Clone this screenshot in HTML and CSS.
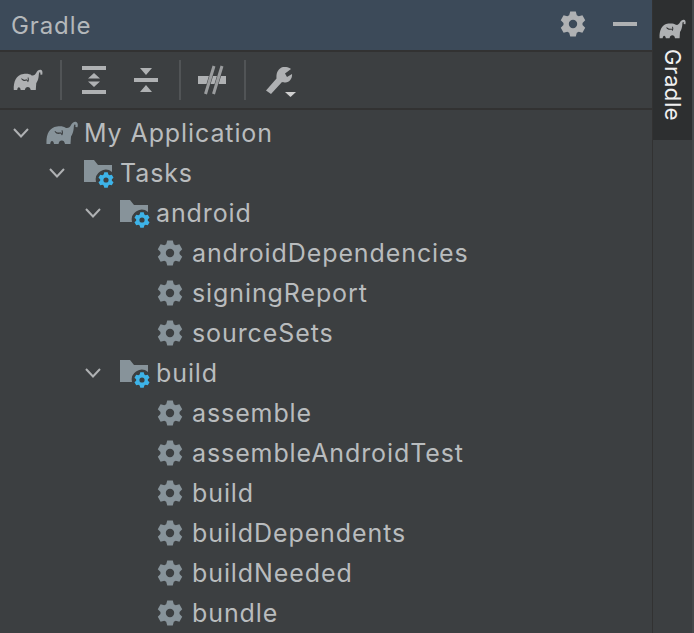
FILE: index.html
```html
<!DOCTYPE html>
<html lang="en">
<head>
<meta charset="utf-8">
<title>Gradle</title>
<link rel="stylesheet" href="styles.css">
</head>
<body>
<svg class="defs" width="0" height="0" aria-hidden="true">
  <defs>
    <symbol id="elephant" viewBox="0 0 32 24">
      <path fill-rule="evenodd" d="M0.500 23 C0 14 3 6.500 11 5.500 C15 5 18 5.500 20 7 C22.500 7.500 24 6 25 4 C26 1.800 28 0.500 29.800 0.800 C31.800 1.200 32.200 3.800 31.500 6.200 L29.300 6 C29.800 4.500 29.500 3.200 28.600 3.600 C27.600 4 28 7 27.500 9 C27 12 26 14 25 15.500 L24.500 23 L19 23 C18.500 20.500 17.500 19.500 15.800 19.500 C14 19.500 13 20.500 12.500 23 L8 23 C7.800 21 7 20 6 20 C5 20 4.500 21 4.200 23 Z M8.500 10.500 C10 13 12.500 13.500 14.500 12.500 L16 14.500 C17.500 12.500 17 10.500 16.300 9 L15.500 9.500 C16 11 15.800 11.500 15.500 12.500 L14.500 11.300 C12.500 12 10.500 11.500 9.300 10 Z"/>
    </symbol>
    <symbol id="gear" viewBox="0 0 26 26">
      <path fill-rule="evenodd" d="M10.200 0.500 H15.800 L16.800 4.200 L18.720 5.310 L22.425 4.330 L25.225 9.170 L22.520 11.890 V14.110 L25.225 16.830 L22.425 21.670 L18.720 20.690 L16.800 21.800 L15.800 25.500 H10.200 L9.200 21.800 L7.280 20.690 L3.575 21.670 L0.775 16.830 L3.480 14.110 V11.890 L0.775 9.170 L3.575 4.330 L7.280 5.310 L9.200 4.200 Z M13 8.800 A4.200 4.200 0 1 0 13 17.200 A4.200 4.200 0 1 0 13 8.800 Z"/>
    </symbol>
    <symbol id="folder-gear" viewBox="0 0 30 30">
      <path class="folder-shape" d="M0 1 H10 L14 6 H28 V13 A10 10 0 0 0 12 23 H0 Z"/>
      <use href="#gear" class="badge-gear" x="14" y="13" width="16" height="16"/>
    </symbol>
  </defs>
</svg>

<main class="window">
  <section class="panel">
    <header class="title-bar">
      <h1 class="title">Gradle</h1>
      <div class="title-actions">
        <svg class="title-gear"><use href="#gear"/></svg>
        <span class="minimize"></span>
      </div>
    </header>

    <div class="toolbar">
      <svg class="tool elephant-tool"><use href="#elephant"/></svg>
      <span class="sep sep-first"></span>
      <svg class="tool expand" viewBox="0 0 24 28">
        <path d="M0 0 H24 V4 H0 Z M0 24 H24 V28 H0 Z M12 7 L18 12.500 H6 Z M6 15.500 H18 L12 21 Z"/>
      </svg>
      <svg class="tool collapse" viewBox="0 0 24 24">
        <path d="M6 0 H18 L12 7 Z M0 10 H24 V14 H0 Z M12 17 L18 24 H6 Z"/>
      </svg>
      <span class="sep sep-second"></span>
      <svg class="tool unlink" viewBox="0 0 28 28">
        <path d="M0 10 H28 V18 H0 Z"/>
        <path class="slash-gap" d="M7.500 28 L16 0 M15.500 28 L24 0"/>
        <path class="slash" d="M7.500 28 L16 0 M15.500 28 L24 0"/>
      </svg>
      <span class="sep sep-third"></span>
      <svg class="tool wrench" viewBox="0 0 32 30">
        <path d="M18 0 C21 -0.500 24 0.500 26 2 L20 6.500 L22 10 L27 7 C27.500 11 25 15 20.500 15.500 C19 15.500 18 15.200 17 15 L6 27 L1 23.500 L11.500 11.500 C11 6 13 1.500 18 0 Z"/>
        <path class="wrench-arrow" d="M20 25 H31 L25.500 30 Z"/>
      </svg>
    </div>

    <ul class="tree">
      <li class="row level-0"><svg class="chevron" viewBox="0 0 16 10"><path d="M1 1 L8 8.500 L15 1"/></svg><svg class="node-elephant"><use href="#elephant"/></svg><span>My Application</span></li>
      <li class="row level-1"><svg class="chevron" viewBox="0 0 16 10"><path d="M1 1 L8 8.500 L15 1"/></svg><svg class="node-folder"><use href="#folder-gear"/></svg><span>Tasks</span></li>
      <li class="row level-2"><svg class="chevron" viewBox="0 0 16 10"><path d="M1 1 L8 8.500 L15 1"/></svg><svg class="node-folder"><use href="#folder-gear"/></svg><span>android</span></li>
      <li class="row leaf"><svg class="node-gear"><use href="#gear"/></svg><span>androidDependencies</span></li>
      <li class="row leaf"><svg class="node-gear"><use href="#gear"/></svg><span>signingReport</span></li>
      <li class="row leaf"><svg class="node-gear"><use href="#gear"/></svg><span>sourceSets</span></li>
      <li class="row level-2"><svg class="chevron" viewBox="0 0 16 10"><path d="M1 1 L8 8.500 L15 1"/></svg><svg class="node-folder"><use href="#folder-gear"/></svg><span>build</span></li>
      <li class="row leaf"><svg class="node-gear"><use href="#gear"/></svg><span>assemble</span></li>
      <li class="row leaf"><svg class="node-gear"><use href="#gear"/></svg><span>assembleAndroidTest</span></li>
      <li class="row leaf"><svg class="node-gear"><use href="#gear"/></svg><span>build</span></li>
      <li class="row leaf"><svg class="node-gear"><use href="#gear"/></svg><span>buildDependents</span></li>
      <li class="row leaf"><svg class="node-gear"><use href="#gear"/></svg><span>buildNeeded</span></li>
      <li class="row leaf"><svg class="node-gear"><use href="#gear"/></svg><span>bundle</span></li>
    </ul>
  </section>

  <aside class="side">
    <div class="side-tab">
      <svg class="side-elephant"><use href="#elephant"/></svg>
      <span class="side-label">Gradle</span>
    </div>
  </aside>
</main>
</body>
</html>
```

FILE: styles.css
```css
* { box-sizing: border-box; }

html, body {
  margin: 0;
  height: 100%;
  overflow: hidden;
  background: #3c3f41;
}

body {
  font-family: "Inter", "Liberation Sans", sans-serif;
  color: #bbbbbb;
}

.defs { position: absolute; }

.window {
  display: flex;
  width: 694px;
  height: 633px;
  overflow: hidden;
}

.panel {
  width: 653px;
  flex: none;
  border-right: 1px solid #323232;
}

.side {
  flex: 1;
  background: #3c3f41;
  border-right: 2px solid #45484a;
}

.side-tab {
  height: 140px;
  background: #2d2f30;
  display: flex;
  flex-direction: column;
  align-items: center;
  padding-top: 18px;
}

.side-elephant {
  width: 27px;
  height: 20px;
  fill: #afb1b3;
  margin-top: 1px;
}

.side-label {
  writing-mode: vertical-rl;
  font-size: 22px;
  color: #f0f0f0;
  margin-top: 10px;
  letter-spacing: 0.6px;
}

.title-bar {
  height: 52px;
  background: #3c4a59;
  border-bottom: 2px solid #323232;
  display: flex;
  align-items: center;
  justify-content: space-between;
  padding: 0 15px 0 11px;
}

.title {
  margin: 0;
  font-size: 24px;
  font-weight: 400;
  letter-spacing: 0.9px;
  color: #b4b8bb;
}

.title-actions {
  display: flex;
  align-items: center;
  gap: 27px;
  margin-bottom: 2px;
}

.title-gear {
  width: 26px;
  height: 26px;
  fill: #afb1b3;
}

.minimize {
  width: 24px;
  height: 4px;
  background: #afb1b3;
}

.toolbar {
  height: 58px;
  background: #3c3f41;
  border-bottom: 2px solid #323232;
  display: flex;
  align-items: center;
  padding-left: 13px;
}

.tool { fill: #afb1b3; flex: none; }

.elephant-tool { width: 30px; height: 22px; }

.sep {
  width: 2px;
  height: 40px;
  background: #515456;
  flex: none;
}

.sep-first { margin-left: 17px; }
.expand { width: 24px; height: 28px; margin-left: 20px; }
.collapse { width: 24px; height: 24px; margin-left: 28px; }
.sep-second { margin-left: 21px; }
.unlink { width: 28px; height: 28px; margin-left: 17px; overflow: visible; }
.slash-gap { fill: none; stroke: #3c3f41; stroke-width: 4; }
.slash { fill: none; stroke: #9a9c9e; stroke-width: 3; }
.sep-third { margin-left: 18px; }
.wrench { width: 32px; height: 30px; margin-left: 19px; margin-top: 4px; }
.wrench-arrow { fill: #d0d0d0; }

.tree {
  list-style: none;
  margin: 0;
  padding: 3px 0 0;
}

.row {
  display: flex;
  align-items: center;
  height: 40px;
  font-size: 25px;
  letter-spacing: 0.9px;
  color: #b9bcbe;
  white-space: nowrap;
}

.chevron {
  width: 16px;
  height: 10px;
  fill: none;
  stroke: #afb1b3;
  stroke-width: 2;
  flex: none;
}

.level-0 { padding-left: 13px; }
.level-1 { padding-left: 49px; }
.level-2 { padding-left: 85px; }
.leaf { padding-left: 157px; }

.node-elephant {
  width: 32px;
  height: 24px;
  fill: #87939a;
  margin-left: 17px;
  margin-right: 6px;
}

.node-folder {
  width: 30px;
  height: 30px;
  margin-left: 19px;
  margin-right: 6px;
  margin-top: 2px;
  flex: none;
}

.folder-shape { fill: #87939a; }
.badge-gear { fill: #3db3e8; }

.node-gear {
  width: 26px;
  height: 26px;
  fill: #87939a;
  margin-right: 9px;
  flex: none;
}
```
